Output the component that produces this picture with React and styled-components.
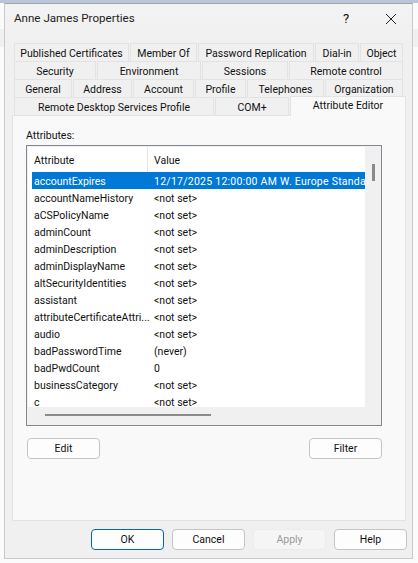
import React from "react";
import styled, { createGlobalStyle } from "styled-components";

const Global = createGlobalStyle`
  html, body { margin: 0; padding: 0; width: 418px; height: 563px; overflow: hidden; }
  body {
    background: linear-gradient(#fbfbfb 0 29px, #f0f0f0 29px 47px, #fbfbfb 47px);
    font-family: Roboto, "Noto Sans", sans-serif;
    font-size: 10.5px;
    color: #111;
  }
  * { box-sizing: border-box; }
`;
const TopStrip = styled.div`
  height: 3px;
  background: #b9c7d8;
`;
const Win = styled.div`
  width: 409px;
  height: 556px;
  margin-left: 4px;
  background: #f0f0f0;
  border: 1px solid #c9c9c9;
  border-top-color: #9aa5b3;
  display: flex;
  flex-direction: column;
`;
const TitleBar = styled.div`
  height: 39px;
  flex: none;
  display: flex;
  align-items: center;
  padding: 0 15px 0 9px;
  background: linear-gradient(#f3f3f3, #f0f0f0);
`;
const Title = styled.div`
  flex: 1;
  font-size: 11.6px;
  color: #222;
  margin-top: -11px;
`;
const Help = styled.div`
  width: 12px;
  font-size: 13px;
  margin: -11px 33px 0 0;
  text-align: center;
`;
const Close = styled.svg`
  width: 12px;
  height: 12px;
  margin-top: -9px;
`;
const Tabs = styled.div`
  padding: 0 0 0 9px;
  display: flex;
  flex-direction: column;
  flex: none;
`;
const TabRow = styled.div`
  display: flex;
  height: 18px;
`;
const Tab = styled.div`
  width: ${(p) => p.$w}px;
  height: 18px;
  margin-right: 1px;
  padding-top: 2px;
  background: #f0f0f0;
  border: 1px solid #e3e3e3;
  border-bottom: 0;
  display: flex;
  align-items: center;
  justify-content: center;
  white-space: nowrap;
`;
const ActiveTab = styled(Tab)`
  height: 20px;
  margin-top: -1px;
  margin-right: 0;
  padding-top: 0;
  background: #f9f9f9;
  position: relative;
  z-index: 1;
  padding-bottom: 3px;
`;
const Page = styled.div`
  margin-left: 7px;
  width: 394px;
  height: 406px;
  flex: none;
  background: #f9f9f9;
  border: 1px solid #e3e3e3;
  padding: 13px 13px 0 13px;
  display: flex;
  flex-direction: column;
`;
const Label = styled.div`
  height: 16px;
`;
const ListBox = styled.div`
  width: 356px;
  height: 281px;
  flex: none;
  background: #f0f0f0;
  border: 1px solid #828790;
  padding: 1px;
  display: grid;
  grid-template-columns: 337px 16px;
  grid-template-rows: 260px 18px;
`;
const ListPane = styled.div`
  background: #fff;
  overflow: hidden;
`;
const HeaderRow = styled.div`
  display: grid;
  grid-template-columns: 120px 1fr;
  height: 25px;
  align-items: center;
`;
const HeaderCell = styled.div`
  padding: 2px 0 0 6px;
  height: 25px;
  display: flex;
  align-items: center;
  border-right: ${(p) => (p.$sep ? "1px solid #e5e5e5" : "0")};
`;
const Row = styled.div`
  display: grid;
  grid-template-columns: 120px 1fr;
  height: 17px;
  margin-left: 4px;
  padding-top: 2px;
  align-items: center;
  white-space: nowrap;
  overflow: hidden;
  background: ${(p) => (p.$sel ? "#0078d7" : "transparent")};
  color: ${(p) => (p.$sel ? "#fff" : "#111")};
`;
const Cell = styled.div`
  padding-left: 2px;
  overflow: hidden;
`;
const ValueCell = styled(Cell)`
  letter-spacing: ${(p) => (p.$sel ? "0.25px" : "0")};
`;
const VScroll = styled.div`
  background: #f0f0f0;
  padding: 17px 0 0 7px;
`;
const VThumb = styled.div`
  width: 3px;
  height: 17px;
  background: #8a8a8a;
`;
const HScroll = styled.div`
  background: #f0f0f0;
  padding: 7px 0 0 17px;
  grid-column: 1 / span 2;
`;
const HThumb = styled.div`
  width: 166px;
  height: 2px;
  background: #8a8a8a;
`;
const BtnRow = styled.div`
  display: flex;
  justify-content: space-between;
  width: 355px;
  margin: 12px 0 0 1px;
`;
const Btn = styled.div`
  width: 73px;
  height: 21px;
  background: ${(p) => (p.$off ? "#f5f5f5" : "#fdfdfd")};
  color: ${(p) => (p.$off ? "#9a9a9a" : "#111")};
  border: 1px solid ${(p) => (p.$def ? "#0067c0" : p.$off ? "#ececec" : "#c4c4c4")};
  border-radius: 4px;
  display: flex;
  align-items: center;
  justify-content: center;
`;
const Footer = styled.div`
  display: flex;
  gap: 8px;
  justify-content: flex-end;
  padding: 8px 5px 0 0;
`;

const tabRows = [
  [["Published Certificates", 115], ["Member Of", 67], ["Password Replication", 116], ["Dial-in", 44], ["Object", 43]],
  [["Security", 82], ["Environment", 104], ["Sessions", 86], ["Remote control", 114]],
  [["General", 58], ["Address", 59], ["Account", 61], ["Profile", 51], ["Telephones", 77], ["Organization", 78]],
];
const rows = [
  ["accountExpires", "12/17/2025 12:00:00 AM W. Europe Standard Time"],
  ["accountNameHistory", "<not set>"],
  ["aCSPolicyName", "<not set>"],
  ["adminCount", "<not set>"],
  ["adminDescription", "<not set>"],
  ["adminDisplayName", "<not set>"],
  ["altSecurityIdentities", "<not set>"],
  ["assistant", "<not set>"],
  ["attributeCertificateAttri...", "<not set>"],
  ["audio", "<not set>"],
  ["badPasswordTime", "(never)"],
  ["badPwdCount", "0"],
  ["businessCategory", "<not set>"],
  ["c", "<not set>"],
];

export default function App() {
  return (
    <>
      <Global />
      <TopStrip />
      <Win>
        <TitleBar>
          <Title>Anne James Properties</Title>
          <Help>?</Help>
          <Close viewBox="0 0 12 12">
            <path d="M1 1 L11 11 M11 1 L1 11" stroke="#222" strokeWidth="1" fill="none" />
          </Close>
        </TitleBar>
        <Tabs>
          {tabRows.map((r, i) => (
            <TabRow key={i}>
              {r.map(([t, w]) => (
                <Tab key={t} $w={w}>{t}</Tab>
              ))}
            </TabRow>
          ))}
          <TabRow>
            <Tab $w={200}>Remote Desktop Services Profile</Tab>
            <Tab $w={74}>COM+</Tab>
            <ActiveTab $w={116}>Attribute Editor</ActiveTab>
          </TabRow>
        </Tabs>
        <Page>
          <Label>Attributes:</Label>
          <ListBox>
            <ListPane>
              <HeaderRow>
                <HeaderCell $sep>Attribute</HeaderCell>
                <HeaderCell>Value</HeaderCell>
              </HeaderRow>
              {rows.map(([a, v], i) => (
                <Row key={a} $sel={i === 0}>
                  <Cell>{a}</Cell>
                  <ValueCell $sel={i === 0}>{v}</ValueCell>
                </Row>
              ))}
            </ListPane>
            <VScroll><VThumb /></VScroll>
            <HScroll><HThumb /></HScroll>
          </ListBox>
          <BtnRow>
            <Btn>Edit</Btn>
            <Btn>Filter</Btn>
          </BtnRow>
        </Page>
        <Footer>
          <Btn $def>OK</Btn>
          <Btn>Cancel</Btn>
          <Btn $off>Apply</Btn>
          <Btn>Help</Btn>
        </Footer>
      </Win>
    </>
  );
}
